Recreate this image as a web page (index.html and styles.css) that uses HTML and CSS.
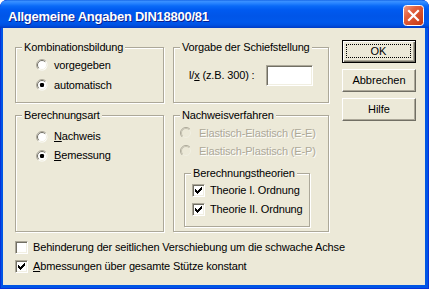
FILE: index.html
```html
<!DOCTYPE html>
<html lang="de">
<head>
<meta charset="utf-8">
<title>Allgemeine Angaben DIN18800/81</title>
<link rel="stylesheet" href="styles.css">
</head>
<body>
<div class="window">
  <div class="titlebar">
    <span class="title">Allgemeine Angaben DIN18800/81</span>
    <svg class="close" width="21" height="21" viewBox="0 0 21 21">
      <defs>
        <linearGradient id="cg" x1="0" y1="0" x2="1" y2="1">
          <stop offset="0" stop-color="#f0a08a"/>
          <stop offset="0.35" stop-color="#e2613f"/>
          <stop offset="1" stop-color="#c4350f"/>
        </linearGradient>
      </defs>
      <rect x="0.5" y="0.5" width="20" height="20" rx="3" fill="url(#cg)" stroke="#fff"/>
      <path d="M6 6 L15 15 M15 6 L6 15" stroke="#fff" stroke-width="2.2" stroke-linecap="square"/>
    </svg>
  </div>
  <div class="client">
    <div class="main">
      <div class="groups">
        <div class="group g-komb">
          <span class="legend">Kombinationsbildung</span>
          <div class="opts">
            <label class="opt">
              <svg class="radio" width="12" height="12" viewBox="0 0 12 12"><circle cx="6" cy="6" r="5.5" fill="#fff"/><path d="M2.1 9.9 A5.5 5.5 0 0 1 9.9 2.1" fill="none" stroke="#aca899"/><path d="M2.8 9.2 A4.5 4.5 0 0 1 9.2 2.8" fill="none" stroke="#716f64"/><path d="M9.2 2.8 A4.5 4.5 0 0 1 2.8 9.2" fill="none" stroke="#f1efe2"/></svg>
              <span>vorgegeben</span>
            </label>
            <label class="opt">
              <svg class="radio" width="12" height="12" viewBox="0 0 12 12"><circle cx="6" cy="6" r="5.5" fill="#fff"/><path d="M2.1 9.9 A5.5 5.5 0 0 1 9.9 2.1" fill="none" stroke="#aca899"/><path d="M2.8 9.2 A4.5 4.5 0 0 1 9.2 2.8" fill="none" stroke="#716f64"/><path d="M9.2 2.8 A4.5 4.5 0 0 1 2.8 9.2" fill="none" stroke="#f1efe2"/><rect x="4" y="4" width="4" height="4" rx="1.2" fill="#000"/></svg>
              <span>automatisch</span>
            </label>
          </div>
        </div>
        <div class="group g-vorg">
          <span class="legend">Vorgabe der Schiefstellung</span>
          <div class="field-row">
            <span>l/<u>x</u> (z.B. 300) :</span>
            <span class="edit"></span>
          </div>
        </div>
        <div class="group g-art">
          <span class="legend">Berechnungsart</span>
          <div class="opts">
            <label class="opt">
              <svg class="radio" width="12" height="12" viewBox="0 0 12 12"><circle cx="6" cy="6" r="5.5" fill="#fff"/><path d="M2.1 9.9 A5.5 5.5 0 0 1 9.9 2.1" fill="none" stroke="#aca899"/><path d="M2.8 9.2 A4.5 4.5 0 0 1 9.2 2.8" fill="none" stroke="#716f64"/><path d="M9.2 2.8 A4.5 4.5 0 0 1 2.8 9.2" fill="none" stroke="#f1efe2"/></svg>
              <span><u>N</u>achweis</span>
            </label>
            <label class="opt">
              <svg class="radio" width="12" height="12" viewBox="0 0 12 12"><circle cx="6" cy="6" r="5.5" fill="#fff"/><path d="M2.1 9.9 A5.5 5.5 0 0 1 9.9 2.1" fill="none" stroke="#aca899"/><path d="M2.8 9.2 A4.5 4.5 0 0 1 9.2 2.8" fill="none" stroke="#716f64"/><path d="M9.2 2.8 A4.5 4.5 0 0 1 2.8 9.2" fill="none" stroke="#f1efe2"/><rect x="4" y="4" width="4" height="4" rx="1.2" fill="#000"/></svg>
              <span><u>B</u>emessung</span>
            </label>
          </div>
        </div>
        <div class="group g-nach">
          <span class="legend">Nachweisverfahren</span>
          <div class="opts">
            <label class="opt disabled">
              <svg class="radio" width="12" height="12" viewBox="0 0 12 12"><circle cx="6" cy="6" r="5.5" fill="#ece9d8"/><path d="M2.1 9.9 A5.5 5.5 0 0 1 9.9 2.1" fill="none" stroke="#aca899"/><path d="M2.8 9.2 A4.5 4.5 0 0 1 9.2 2.8" fill="none" stroke="#c5c2b2"/><path d="M9.2 2.8 A4.5 4.5 0 0 1 2.8 9.2" fill="none" stroke="#f1efe2"/></svg>
              <span>Elastisch-Elastisch (E-E)</span>
            </label>
            <label class="opt disabled">
              <svg class="radio" width="12" height="12" viewBox="0 0 12 12"><circle cx="6" cy="6" r="5.5" fill="#ece9d8"/><path d="M2.1 9.9 A5.5 5.5 0 0 1 9.9 2.1" fill="none" stroke="#aca899"/><path d="M2.8 9.2 A4.5 4.5 0 0 1 9.2 2.8" fill="none" stroke="#c5c2b2"/><path d="M9.2 2.8 A4.5 4.5 0 0 1 2.8 9.2" fill="none" stroke="#f1efe2"/></svg>
              <span>Elastisch-Plastisch (E-P)</span>
            </label>
          </div>
          <div class="group inner">
            <span class="legend">Berechnungstheorien</span>
            <div class="checks-inner">
              <label class="chk"><span class="cb"><svg width="11" height="11" viewBox="0 0 11 11"><path d="M2 4h1v3h-1z M3 5h1v3h-1z M4 6h1v3h-1z M5 5h1v3h-1z M6 4h1v3h-1z M7 3h1v3h-1z M8 2h1v3h-1z" fill="#000"/></svg></span><span>Theorie I. Ordnung</span></label>
              <label class="chk"><span class="cb"><svg width="11" height="11" viewBox="0 0 11 11"><path d="M2 4h1v3h-1z M3 5h1v3h-1z M4 6h1v3h-1z M5 5h1v3h-1z M6 4h1v3h-1z M7 3h1v3h-1z M8 2h1v3h-1z" fill="#000"/></svg></span><span>Theorie II. Ordnung</span></label>
            </div>
          </div>
        </div>
      </div>
      <div class="buttons">
        <button class="btn default"><span class="focus">OK</span></button>
        <button class="btn">Abbrechen</button>
        <button class="btn">Hilfe</button>
      </div>
    </div>
    <div class="checks">
      <label class="chk"><span class="cb"></span><span>Behinderung der seitlichen Verschiebung um die schwache Achse</span></label>
      <label class="chk"><span class="cb"><svg width="11" height="11" viewBox="0 0 11 11"><path d="M2 4h1v3h-1z M3 5h1v3h-1z M4 6h1v3h-1z M5 5h1v3h-1z M6 4h1v3h-1z M7 3h1v3h-1z M8 2h1v3h-1z" fill="#000"/></svg></span><span><u>A</u>bmessungen über gesamte Stütze konstant</span></label>
    </div>
  </div>
</div>
</body>
</html>
```
FILE: styles.css
```css
html, body {
  margin: 0;
  padding: 0;
  background: #ffffff;
}

body {
  font-family: "Liberation Sans", Arial, sans-serif;
  font-size: 11px;
  line-height: 13px;
  letter-spacing: -0.15px;
  color: #000;
}

.window {
  width: 429px;
  height: 289px;
  display: flex;
  flex-direction: column;
  background: #0055e5;
  border-radius: 7px 7px 0 0;
  overflow: hidden;
  box-shadow: inset 0 0 0 1px #0831d9;
}

.titlebar {
  height: 28px;
  flex: none;
  display: flex;
  align-items: flex-start;
  padding: 0 5px 0 8px;
  background: linear-gradient(to bottom,
    #0a5ae0 0px, #3d92ff 1px, #2a86ff 3px, #0a6af7 6px,
    #005af0 10px, #0055e8 16px, #0058ec 22px, #0052e2 25px,
    #0043d0 27px, #003cc4 28px);
  border-radius: 7px 7px 0 0;
}

.title {
  flex: 1;
  margin-top: 9px;
  color: #fff;
  font-weight: bold;
  font-size: 13px;
  line-height: 15px;
  letter-spacing: -0.25px;
  text-shadow: 1px 1px 0 #0a1f8f;
  white-space: nowrap;
}

.close {
  flex: none;
  margin-top: 5px;
  display: block;
}

.client {
  flex: 1;
  margin: 0 4px 4px 3px;
  background: #ece9d8;
  padding: 12px 0 0 12px;
  display: flex;
  flex-direction: column;
}

.main {
  display: flex;
  align-items: flex-start;
}

.groups {
  margin-top: 7px;
  display: grid;
  grid-template-columns: 149px 156px;
  grid-template-rows: 56px 117px;
  column-gap: 9px;
  row-gap: 12px;
}

.group {
  box-sizing: border-box;
  border: 1px solid #aca899;
  box-shadow: inset 1px 1px 0 #fff, 1px 1px 0 #fff;
  display: flex;
  flex-direction: column;
  align-items: flex-start;
}

.legend {
  margin: -7px 0 0 6px;
  padding: 0 2px;
  background: #ece9d8;
  line-height: 13px;
  white-space: nowrap;
}

.opts {
  display: flex;
  flex-direction: column;
}

.opt {
  display: flex;
  align-items: center;
  gap: 6px;
  white-space: nowrap;
}

.radio {
  display: block;
  flex: none;
}

.g-komb .opts {
  padding: 1px 0 0 20px;
}
.g-komb .opt {
  height: 20px;
}

.g-art .opts {
  padding: 5px 0 0 20px;
}
.g-art .opt {
  height: 19px;
}

.g-nach .opts {
  padding: 2px 0 0 6px;
}
.g-nach .opt {
  height: 18px;
  gap: 7px;
}

.disabled {
  color: #aca899;
  text-shadow: 1px 1px 0 #fff;
}

.field-row {
  align-self: stretch;
  margin-top: 11px;
  padding: 0 15px;
  height: 21px;
  display: flex;
  align-items: center;
  justify-content: space-between;
}

.edit {
  box-sizing: border-box;
  width: 47px;
  height: 21px;
  background: #fff;
  border: 1px solid;
  border-color: #aca899 #fff #fff #aca899;
  box-shadow: inset 1px 1px 0 #716f64, inset -1px -1px 0 #f1efe2;
}

.inner {
  margin: 13px 0 0 10px;
  width: 126px;
  height: 54px;
}

.checks-inner {
  padding: 1px 0 0 7px;
  display: flex;
  flex-direction: column;
}

.chk {
  display: flex;
  align-items: center;
  gap: 5px;
  height: 19px;
  white-space: nowrap;
}

.cb {
  box-sizing: border-box;
  flex: none;
  width: 13px;
  height: 13px;
  background: #fff;
  border: 1px solid;
  border-color: #aca899 #fff #fff #aca899;
  box-shadow: inset 1px 1px 0 #716f64, inset -1px -1px 0 #f1efe2;
  display: flex;
}

.cb svg {
  display: block;
}

.buttons {
  margin-left: 13px;
  display: flex;
  flex-direction: column;
  gap: 6px;
}

.btn {
  box-sizing: border-box;
  width: 74px;
  height: 23px;
  margin: 0;
  padding: 0;
  font: inherit;
  color: #000;
  background: #ece9d8;
  border: 1px solid;
  border-color: #fff #716f64 #716f64 #fff;
  box-shadow: inset -1px -1px 0 #aca899;
  display: flex;
  align-items: center;
  justify-content: center;
}

.btn.default {
  border: 1px solid #000;
  box-shadow: inset 1px 1px 0 #fff, inset -1px -1px 0 #716f64, inset -2px -2px 0 #aca899;
  padding: 3px 4px 4px 3px;
  align-items: stretch;
}

.focus {
  flex: 1;
  border: 1px dotted #000;
  display: flex;
  align-items: center;
  justify-content: center;
}

.checks {
  margin-top: 6px;
  display: flex;
  flex-direction: column;
}
```
